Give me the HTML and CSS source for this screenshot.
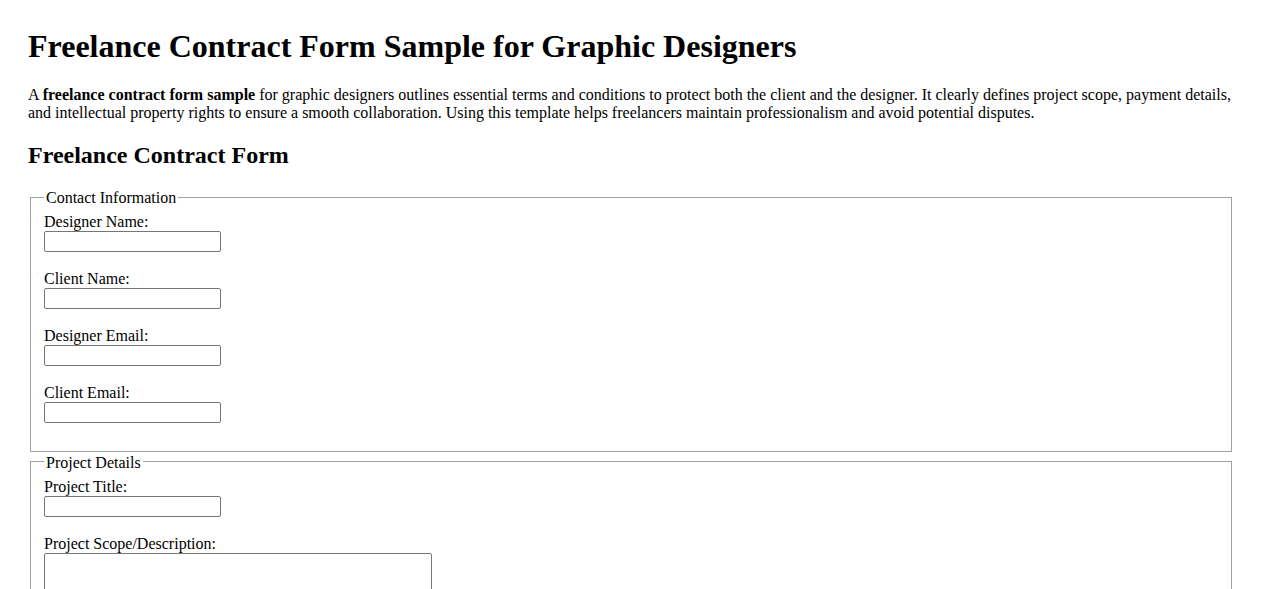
FILE: index.html
```html
<!DOCTYPE html>
<html lang="en">
<head>
<meta charset="utf-8">
<title>Freelance Contract Form Sample for Graphic Designers</title>
<link rel="stylesheet" href="styles.css">
</head>
<body>
<div class="page">
  <h1 class="title">Freelance Contract Form Sample for Graphic Designers</h1>
  <p class="intro">A <strong>freelance contract form sample</strong> for graphic designers outlines essential terms and conditions to protect both the client and the designer. It clearly defines project scope, payment details, and intellectual property rights to ensure a smooth collaboration. Using this template helps freelancers maintain professionalism and avoid potential disputes.</p>
  <h2 class="subtitle">Freelance Contract Form</h2>
  <form class="form">
    <fieldset class="group">
      <legend class="legend">Contact Information</legend>
      <div class="field">
        <label class="label" for="dname">Designer Name:</label>
        <input class="input" type="text" id="dname">
      </div>
      <div class="field">
        <label class="label" for="cname">Client Name:</label>
        <input class="input" type="text" id="cname">
      </div>
      <div class="field">
        <label class="label" for="demail">Designer Email:</label>
        <input class="input" type="email" id="demail">
      </div>
      <div class="field">
        <label class="label" for="cemail">Client Email:</label>
        <input class="input" type="email" id="cemail">
      </div>
    </fieldset>
    <fieldset class="group">
      <legend class="legend">Project Details</legend>
      <div class="field">
        <label class="label" for="ptitle">Project Title:</label>
        <input class="input" type="text" id="ptitle">
      </div>
      <div class="field">
        <label class="label" for="pscope">Project Scope/Description:</label>
        <textarea class="textarea" id="pscope"></textarea>
      </div>
    </fieldset>
  </form>
</div>
</body>
</html>
```
FILE: styles.css
```css
html, body {
  background: #ffffff;
}
body {
  margin: 0;
  font-family: "Liberation Serif", "Times New Roman", serif;
  font-size: 16px;
  color: #000000;
}
.page {
  padding: 28px 28px 28px 28px;
}
.title {
  font-size: 32px;
  font-weight: bold;
  margin: 0 0 21.44px 0;
}
.intro {
  margin: 0 0 16px 0;
}
.subtitle {
  font-size: 24px;
  font-weight: bold;
  margin: 19.92px 0 18px 0;
}
.form {
  margin: 0;
}
.group {
  margin: 0 3px 0 2px;
  padding: 5.6px 13px 10px 13px;
  border: 1px solid #a0a0a0;
}
.legend {
  padding: 2px 2px 0 2px;
}
.field {
  margin-bottom: 18px;
}
.label {
  display: block;
}
.input {
  display: block;
  box-sizing: border-box;
  width: 177px;
  height: 21px;
  margin: 0;
  border: 1px solid #767676;
  border-radius: 2px;
  padding: 1px 2px;
  font-family: "Liberation Sans", Arial, sans-serif;
  font-size: 13.33px;
  background: #fff;
}
.textarea {
  display: block;
  box-sizing: border-box;
  width: 388px;
  height: 72px;
  margin: 0;
  border: 1px solid #767676;
  border-radius: 2px;
  padding: 2px;
  font-family: "Liberation Mono", monospace;
  font-size: 13.33px;
  resize: vertical;
  background: #fff;
}
```
